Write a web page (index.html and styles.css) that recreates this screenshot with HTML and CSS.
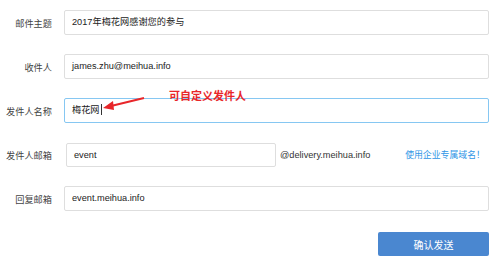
FILE: index.html
```html
<!DOCTYPE html>
<html lang="zh-CN">
<head>
    <meta charset="UTF-8">
    <title>发送邮件</title>
    <link rel="stylesheet" href="styles.css">
</head>
<body>
    <div class="form">
        <div class="row">
            <label class="label">邮件主题</label>
            <div class="input">2017年梅花网感谢您的参与</div>
        </div>
        <div class="row">
            <label class="label">收件人</label>
            <div class="input">james.zhu@meihua.info</div>
        </div>
        <div class="row sender">
            <label class="label">发件人名称</label>
            <div class="input focus">梅花网<span class="cursor"></span></div>
            <span class="tip">可自定义发件人</span>
            <svg class="arrow" width="44" height="16" viewBox="0 0 44 16">
                <path d="M42 2 L9 10" stroke="#e8262a" stroke-width="2" fill="none"/>
                <path d="M1 12 L11 5 L12 14 Z" fill="#e8262a"/>
            </svg>
        </div>
        <div class="row">
            <label class="label">发件人邮箱</label>
            <div class="input short">event</div>
            <span class="domain">@delivery.meihua.info</span>
            <a class="link">使用企业专属域名！</a>
        </div>
        <div class="row">
            <label class="label">回复邮箱</label>
            <div class="input">event.meihua.info</div>
        </div>
        <div class="actions">
            <button class="send">确认发送</button>
        </div>
    </div>
</body>
</html>
```

FILE: styles.css
```css
* {
    margin: 0;
    padding: 0;
    box-sizing: border-box;
}

body {
    background: #fff;
    font-family: "Liberation Sans", "Noto Sans CJK SC", sans-serif;
    font-size: 9.2px;
    color: #333;
}

.form {
    width: 500px;
    padding: 10px 11px 0 0;
}

.row {
    position: relative;
    display: flex;
    align-items: center;
    height: 25px;
    margin-bottom: 19px;
}

.label {
    width: 52px;
    flex: none;
    margin-right: 12px;
    text-align: right;
    color: #444;
}

.input {
    flex: 1;
    height: 25px;
    line-height: 23px;
    padding-left: 7px;
    border: 1px solid #dedede;
    border-radius: 2px;
    background: #fff;
    color: #222;
}

.input.focus {
    border-color: #86c7f2;
}

.cursor {
    display: inline-block;
    width: 1px;
    height: 11px;
    margin-left: 1px;
    vertical-align: -2px;
    background: #333;
}

.input.short {
    flex: none;
    width: 210px;
    height: 24px;
    margin-left: 2px;
}

.domain {
    margin-left: 4px;
    color: #333;
}

.link {
    margin-left: auto;
    margin-right: 4px;
    color: #2f96e6;
    font-size: 8.9px;
}

.tip {
    position: absolute;
    left: 169px;
    top: -11px;
    color: #e8262a;
    font-size: 11px;
    font-weight: bold;
}

.arrow {
    position: absolute;
    left: 102px;
    top: -2px;
}

.actions {
    display: flex;
    justify-content: flex-end;
    padding-top: 2px;
}

.send {
    width: 111px;
    height: 24px;
    border: none;
    border-radius: 2px;
    background: #4a87d0;
    color: #fff;
    font-family: "Liberation Sans", "Noto Sans CJK SC", sans-serif;
    font-size: 10px;
}
```
